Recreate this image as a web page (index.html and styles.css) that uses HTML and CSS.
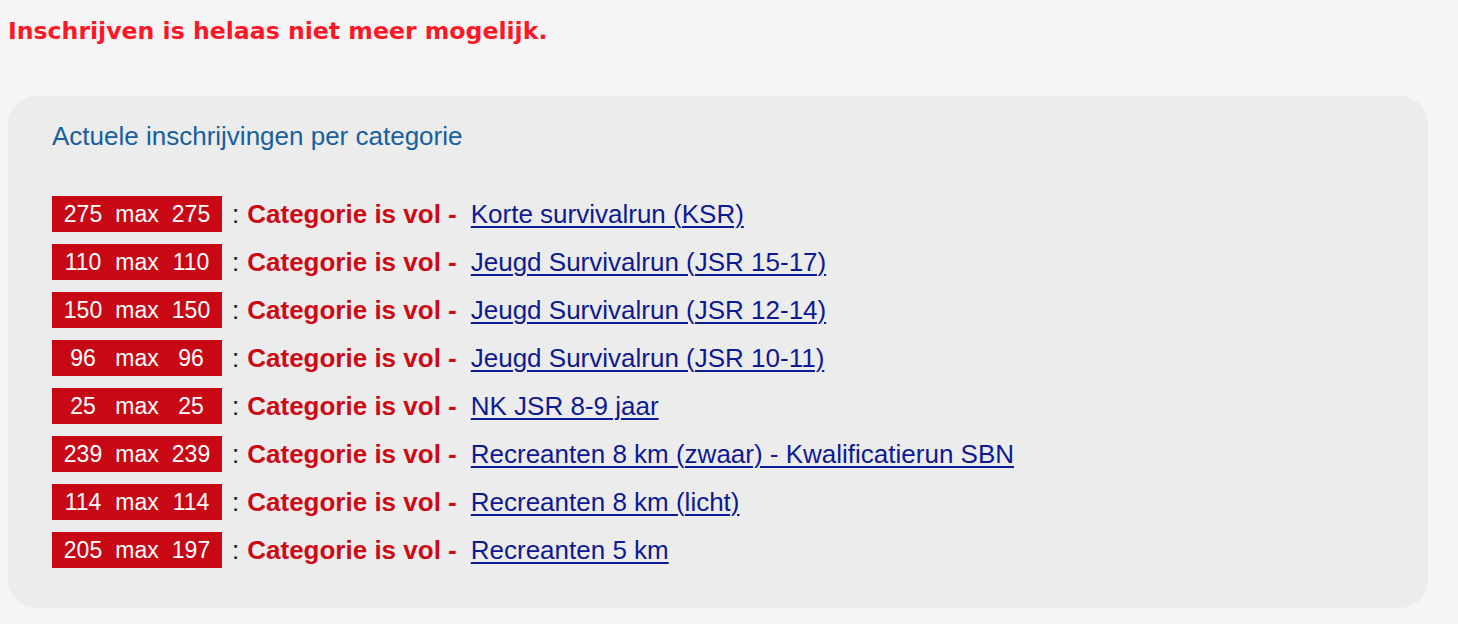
FILE: index.html
```html
<!DOCTYPE html>
<html lang="nl">
<head>
<meta charset="utf-8">
<title>Inschrijvingen</title>
<link rel="stylesheet" href="styles.css">
</head>
<body>
<h1 class="notice">Inschrijven is helaas niet meer mogelijk.</h1>
<section class="panel">
  <h2 class="panel-title">Actuele inschrijvingen per categorie</h2>
  <ul class="cats">
    <li class="cat"><span class="badge"><span>275</span><span>max</span><span>275</span></span><span class="colon">:</span><strong class="full">Categorie is vol -</strong><a class="cat-link" href="#">Korte survivalrun (KSR)</a></li>
    <li class="cat"><span class="badge"><span>110</span><span>max</span><span>110</span></span><span class="colon">:</span><strong class="full">Categorie is vol -</strong><a class="cat-link" href="#">Jeugd Survivalrun (JSR 15-17)</a></li>
    <li class="cat"><span class="badge"><span>150</span><span>max</span><span>150</span></span><span class="colon">:</span><strong class="full">Categorie is vol -</strong><a class="cat-link" href="#">Jeugd Survivalrun (JSR 12-14)</a></li>
    <li class="cat"><span class="badge"><span>96</span><span>max</span><span>96</span></span><span class="colon">:</span><strong class="full">Categorie is vol -</strong><a class="cat-link" href="#">Jeugd Survivalrun (JSR 10-11)</a></li>
    <li class="cat"><span class="badge"><span>25</span><span>max</span><span>25</span></span><span class="colon">:</span><strong class="full">Categorie is vol -</strong><a class="cat-link" href="#">NK JSR 8-9 jaar</a></li>
    <li class="cat"><span class="badge"><span>239</span><span>max</span><span>239</span></span><span class="colon">:</span><strong class="full">Categorie is vol -</strong><a class="cat-link" href="#">Recreanten 8 km (zwaar) - Kwalificatierun SBN</a></li>
    <li class="cat"><span class="badge"><span>114</span><span>max</span><span>114</span></span><span class="colon">:</span><strong class="full">Categorie is vol -</strong><a class="cat-link" href="#">Recreanten 8 km (licht)</a></li>
    <li class="cat"><span class="badge"><span>205</span><span>max</span><span>197</span></span><span class="colon">:</span><strong class="full">Categorie is vol -</strong><a class="cat-link" href="#">Recreanten 5 km</a></li>
  </ul>
</section>
</body>
</html>
```

FILE: styles.css
```css
html, body {
  margin: 0;
  padding: 0;
}
body {
  background: #f5f5f5;
  font-family: "Liberation Sans", Arial, sans-serif;
  padding: 0 30px 0 8px;
}
.notice {
  margin: 0;
  padding-top: 16px;
  height: 80px;
  box-sizing: border-box;
  font-family: "DejaVu Sans", sans-serif;
  font-weight: bold;
  font-size: 23.6px;
  line-height: 30px;
  color: #ff1627;
}
.panel {
  background: #ececec;
  border-radius: 28px;
  padding: 24px 44px 40px;
  margin-top: 16px;
}
.panel-title {
  margin: 0 0 44px;
  font-weight: normal;
  font-size: 26px;
  line-height: 32px;
  color: #175f9e;
}
.cats {
  list-style: none;
  margin: 0;
  padding: 0;
  display: flex;
  flex-direction: column;
  gap: 12px;
}
.cat {
  display: flex;
  align-items: center;
  height: 36px;
  font-size: 26px;
  white-space: nowrap;
}
.badge {
  display: grid;
  grid-template-columns: 62px 46px 62px;
  align-items: center;
  height: 36px;
  background: #c90816;
  color: #fff;
  font-size: 23px;
  text-align: center;
}
.colon {
  color: #111;
  margin-left: 10px;
}
.full {
  color: #cc0a16;
  font-weight: bold;
  margin-left: 8px;
}
.cat-link {
  color: #0d1a94;
  text-decoration: underline;
  text-decoration-thickness: 2px;
  text-underline-offset: 3px;
  margin-left: 14px;
}
```
